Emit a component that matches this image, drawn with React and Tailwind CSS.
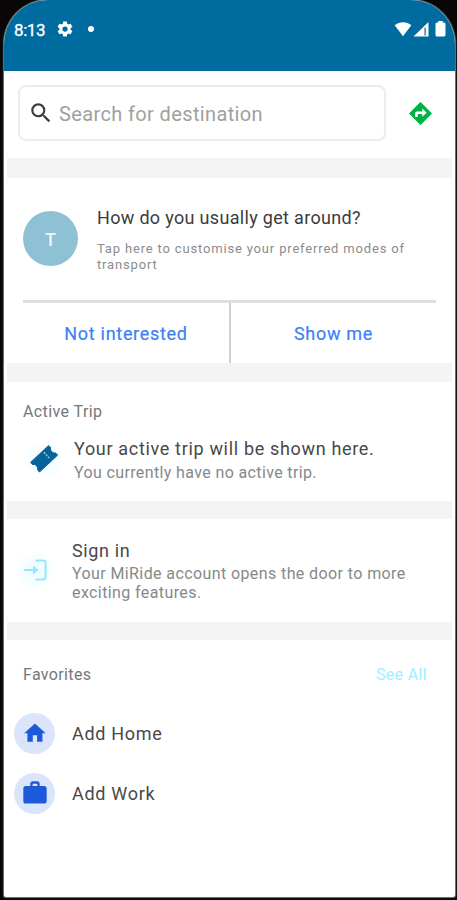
import React from 'react';

function StatusBar() {
  return (
    <header className="flex h-[71px] shrink-0 items-start justify-between bg-[#006b9f] pt-[19px] pl-[10px] pr-[9px] text-white">
      <div className="flex h-5 items-center">
        <span className="w-[33px] pt-px text-[17px] leading-5 tracking-[-0.4px] whitespace-nowrap [-webkit-text-stroke:0.3px_#fff]">8:13</span>
        <svg className="ml-[9px] size-[18px]" viewBox="0 0 24 24" fill="currentColor">
          <path d="M19.43 12.98c.04-.32.07-.64.07-.98s-.03-.66-.07-.98l2.11-1.65c.19-.15.24-.42.12-.64l-2-3.46c-.12-.22-.39-.3-.61-.22l-2.49 1c-.52-.4-1.08-.73-1.69-.98l-.38-2.65C14.46 2.18 14.25 2 14 2h-4c-.25 0-.46.18-.49.42l-.38 2.65c-.61.25-1.17.59-1.69.98l-2.49-1c-.23-.09-.49 0-.61.22l-2 3.46c-.13.22-.07.49.12.64l2.11 1.65c-.04.32-.07.65-.07.98s.03.66.07.98l-2.11 1.65c-.19.15-.24.42-.12.64l2 3.46c.12.22.39.3.61.22l2.49-1c.52.4 1.08.73 1.69.98l.38 2.65c.03.24.24.42.49.42h4c.25 0 .46-.18.49-.42l.38-2.65c.61-.25 1.17-.59 1.69-.98l2.49 1c.23.09.49 0 .61-.22l2-3.46c.12-.22.07-.49-.12-.64l-2.11-1.65zM12 15.5a3.5 3.5 0 1 1 0-7 3.5 3.5 0 0 1 0 7z" />
        </svg>
        <span className="mb-px ml-[14px] size-[6px] rounded-full bg-white" />
      </div>
      <div className="flex h-5 items-center">
        <svg className="h-[16px] w-[18px]" viewBox="0 0 18 16" fill="currentColor">
          <path d="M.7 4.2C3 2.2 6 1.2 9 1.2s6 1 8.300 3L9 15.200z" />
        </svg>
        <svg className="ml-px h-[16px] w-[16px]" viewBox="0 0 16 16">
          <path d="M.5 15.500L15.500 1v14.500z" fill="#fff" />
          <path d="M11.300 6.800h1.800v7.700h-1.800z" fill="#5c8fb8" />
        </svg>
        <svg className="ml-[6px] h-[16px] w-[11px]" viewBox="0 0 11 16" fill="currentColor">
          <path d="M3.300 0h4.400v1.500h1.300a1.500 1.500 0 0 1 1.500 1.500v11a1.500 1.500 0 0 1-1.500 1.500H2A1.500 1.500 0 0 1 .5 14V3A1.500 1.500 0 0 1 2 1.500h1.300z" />
        </svg>
      </div>
    </header>
  );
}

function SearchRow() {
  return (
    <section className="flex h-[87px] shrink-0 items-start pt-[14px] pl-[14px]">
      <div className="flex h-[56px] w-[368px] items-center rounded-lg border-2 border-[#ececec] pl-[8px]">
        <svg className="size-[26px]" viewBox="0 0 24 24" fill="#3c3c3c">
          <path d="M15.500 14h-.79l-.28-.27A6.471 6.471 0 0 0 16 9.500 6.500 6.500 0 1 0 9.500 16c1.610 0 3.090-.59 4.230-1.570l.27.28v.79l5 4.990L20.490 19l-4.990-5zm-6 0C7.010 14 5 11.990 5 9.500S7.010 5 9.500 5 14 7.010 14 9.500 11.990 14 9.500 14z" />
        </svg>
        <span className="ml-[5px] pt-px text-[20px] leading-6 tracking-[0.37px] whitespace-nowrap text-[#a0a0a0]">Search for destination</span>
      </div>
      <svg className="mt-[16px] ml-[22px] size-[25px]" viewBox="0 0 24 24">
        <path d="M12 1.600L22.400 12 12 22.400 1.600 12z" fill="#00b245" stroke="#00b245" strokeWidth="1" strokeLinejoin="round" />
        <path d="M13.700 15v-2.500H9.300v2.800H6.800v-3.500c0-1 .8-1.800 1.800-1.800h5.100V7.300l4.300 3.900z" fill="#fff" />
      </svg>
    </section>
  );
}

function Divider({ className }) {
  return <div className={`mx-[3px] shrink-0 bg-[#f4f4f4] ${className}`} />;
}

function TravelPrompt() {
  return (
    <section className="h-[185px] shrink-0 pl-[19px] pr-[19px]">
      <div className="flex h-[122px] items-start">
        <div className="mt-[33px] flex size-[55px] items-center justify-center rounded-full bg-[#8fc1d5] pt-px text-[18px] font-medium text-[#edf6fa]">T</div>
        <div className="ml-[19px] pt-[28px]">
          <p className="text-[18px] leading-6 tracking-[0.32px] whitespace-nowrap text-[#3c3c3c]">How do you usually get around?</p>
          <p className="mt-[11px] text-[13px] leading-4 tracking-[0.83px] whitespace-nowrap text-[#8c8c8c]">
            Tap here to customise your preferred modes of
            <br />
            transport
          </p>
        </div>
      </div>
      <div className="flex h-[63px] border-t-[3px] border-[#dedede] text-[18px] tracking-[0.7px] text-[#3c7ff5]">
        <button className="w-[208px] border-r-2 border-[#d0d0d0] pt-px [-webkit-text-stroke:0.2px_#3c7ff5]">Not interested</button>
        <button className="flex-1 pt-px [-webkit-text-stroke:0.2px_#3c7ff5]">Show me</button>
      </div>
    </section>
  );
}

function ActiveTrip() {
  return (
    <section className="h-[119px] shrink-0 pl-[19px] pt-[20px]">
      <h2 className="text-[16px] leading-5 tracking-[0.4px] text-[#74787b]">Active Trip</h2>
      <div className="mt-[15px] flex items-start">
        <div className="mt-[1px] flex size-[42px] items-center justify-center rounded-full bg-radial from-[#effbff] to-white to-70%">
          <svg className="size-[30px]" viewBox="0 0 30 30">
            <g transform="rotate(-43 15 15)">
              <path d="M3 8.500h24.500v2.800c-2.600 1.500-2.600 5.600 0 7.200v2.800H3v-2.800c2.600-1.600 2.600-5.700 0-7.200z" fill="#07639a" stroke="#07639a" strokeWidth="1" strokeLinejoin="round" />
              <path d="M19.500 10v2m0 1v2m0 1v2" stroke="#9fd1e5" strokeWidth="1.300" />
            </g>
          </svg>
        </div>
        <div className="ml-[9px]">
          <p className="text-[18px] leading-6 tracking-[0.67px] whitespace-nowrap text-[#484848]">Your active trip will be shown here.</p>
          <p className="text-[16px] leading-[23px] tracking-[0.37px] whitespace-nowrap text-[#85898b]">You currently have no active trip.</p>
        </div>
      </div>
    </section>
  );
}

function SignIn() {
  return (
    <section className="flex h-[103px] shrink-0 items-start pl-[10px] pt-[20px]">
      <div className="mt-[10px] flex size-[42px] items-center justify-center rounded-full bg-radial from-[#e9fcff] to-white to-70%">
        <svg className="h-[22px] w-[24px]" viewBox="0 0 24 22" fill="none" stroke="#91e8fa" strokeWidth="2">
          <path d="M12.500 1.500H20.500a2 2 0 0 1 2 2v15a2 2 0 0 1-2 2H12.500" />
          <path d="M1 11H12" />
          <path d="M10 6.500L15.500 11l-5.500 4.500z" fill="#91e8fa" stroke="none" />
        </svg>
      </div>
      <div className="ml-[16px]">
        <p className="text-[18px] leading-6 tracking-[0.65px] text-[#484848]">Sign in</p>
        <p className="mt-px text-[16px] leading-[19px] tracking-[0.4px] whitespace-nowrap text-[#85898b]">
          Your MiRide account opens the door to more
          <br />
          exciting features.
        </p>
      </div>
    </section>
  );
}

function FavoriteRow({ label, children }) {
  return (
    <div className="flex h-[60px] items-center">
      <div className="flex size-[41px] items-center justify-center rounded-full bg-[#dae4fa]">
        <svg className="size-[28px]" viewBox="0 0 24 24" fill="#1c5ad9">{children}</svg>
      </div>
      <span className="ml-[17px] pt-px text-[18px] leading-6 tracking-[0.7px] text-[#484848]">{label}</span>
    </div>
  );
}

function Favorites() {
  return (
    <section className="pl-[10px] pr-[28px] pt-[25px]">
      <div className="flex justify-between pl-[9px] text-[16px] leading-5 tracking-[0.35px]">
        <h2 className="text-[#74787b]">Favorites</h2>
        <span className="text-[#9cf0ff]">See All</span>
      </div>
      <div className="pt-[18px]">
        <FavoriteRow label="Add Home">
          <path d="M10 20v-6h4v6h5v-8h3L12 3 2 12h3v8z" transform="translate(.9 1.100) scale(.92)" />
        </FavoriteRow>
        <FavoriteRow label="Add Work">
          <path d="M20 6h-4V4c0-1.110-.89-2-2-2h-4c-1.110 0-2 .89-2 2v2H4c-1.110 0-1.990.89-1.990 2L2 19c0 1.110.89 2 2 2h16c1.110 0 2-.89 2-2V8c0-1.110-.89-2-2-2zm-6 0h-4V4h4v2z" />
        </FavoriteRow>
      </div>
    </section>
  );
}

export default function App() {
  return (
    <div className="h-[900px] w-[457px] overflow-hidden bg-[#080606] pr-[2px] pb-[3px] pl-[4px] font-[Roboto,sans-serif]">
      <main className="flex h-full flex-col overflow-hidden rounded-t-[44px] rounded-b-[2px] bg-white shadow-[0_0_1px_1px_#777]">
        <StatusBar />
        <SearchRow />
        <Divider className="h-[20px]" />
        <TravelPrompt />
        <Divider className="h-[19px]" />
        <ActiveTrip />
        <Divider className="h-[18px]" />
        <SignIn />
        <Divider className="h-[18px]" />
        <Favorites />
      </main>
    </div>
  );
}
